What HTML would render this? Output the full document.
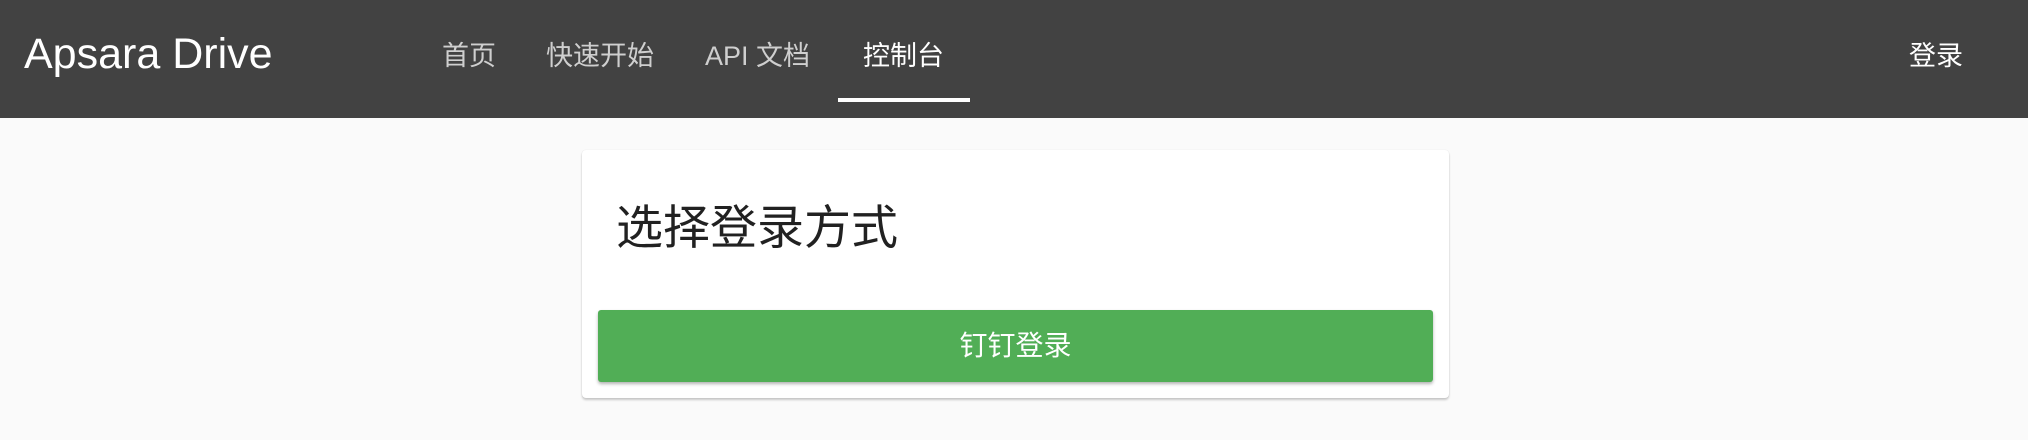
<!DOCTYPE html>
<html><head><meta charset="utf-8"><style>
*{margin:0;padding:0;box-sizing:border-box}
body{width:2028px;height:440px;background:#fafafa;font-family:"Liberation Sans","Noto Sans CJK SC",sans-serif;position:relative;overflow:hidden}
.hdr{position:absolute;left:0;top:0;width:2028px;height:118px;background:#424242}
.logo{position:absolute;left:24px;top:28px;font-size:43px;color:#fff;line-height:52px}
.nav{position:absolute;top:36px;font-size:27px;color:#cfcfcf;line-height:40px}
.act{color:#fff}
.ul{position:absolute;left:838px;top:98px;width:132px;height:4px;background:#fff}
.card{position:absolute;left:582px;top:150px;width:867px;height:248px;background:#fff;border-radius:4px;box-shadow:0 2px 2px rgba(0,0,0,.2),0 0 1px rgba(0,0,0,.12)}
.title{position:absolute;left:616px;top:199px;font-size:47px;color:#212121;line-height:58px}
.btn{position:absolute;left:598px;top:310px;width:835px;height:72px;background:#51ae56;border-radius:3px;box-shadow:0 2px 3px rgba(0,0,0,.3);color:#fff;font-size:28px;text-align:center;line-height:72px}
</style></head><body>
<div class="hdr"></div>
<div class="logo">Apsara Drive</div>
<div class="nav" style="left:442px">首页</div>
<div class="nav" style="left:546px">快速开始</div>
<div class="nav" style="left:705px">API 文档</div>
<div class="nav act" style="left:863px">控制台</div>
<div class="ul"></div>
<div class="nav act" style="left:1909px">登录</div>
<div class="card"></div>
<div class="title">选择登录方式</div>
<div class="btn">钉钉登录</div>
</body></html>
